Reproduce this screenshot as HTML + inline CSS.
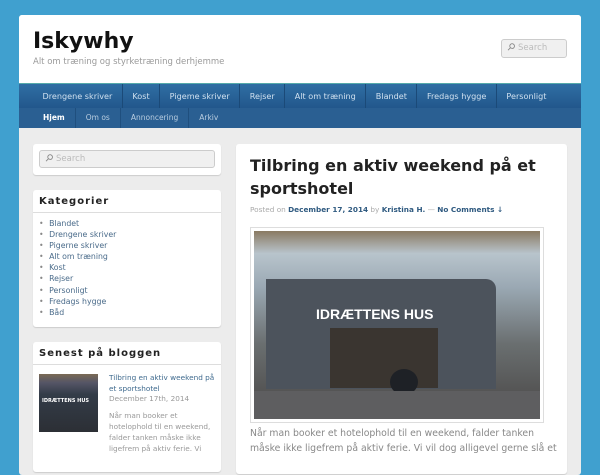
<!DOCTYPE html>
<html><head><meta charset="utf-8"><style>
*{margin:0;padding:0;box-sizing:border-box}
body{width:600px;height:450px;overflow:hidden;background:#40a0cf;font-family:"DejaVu Sans","Liberation Sans",sans-serif;position:relative}
.wrap{position:absolute;left:19px;top:15px;width:562px;height:460px;background:#ececec;border-radius:3px;overflow:hidden}
.hdr{height:68px;background:#fff;position:relative}
.hdr h1{position:absolute;left:14px;top:14px;font-size:22px;font-weight:bold;color:#111}
.hdr p{position:absolute;left:14px;top:42px;font-size:8.5px;color:#9a9a9a}
.srch{position:absolute;left:482px;top:24px;width:66px;height:19px;border:1px solid #ccc;border-radius:3px;background:#f0f0f0;font-size:8.5px;color:#bbb;padding:3px 0 0 16px}
.srch:before{content:"⚲";position:absolute;left:5px;top:2px;color:#888;font-size:10px;transform:rotate(45deg) scaleX(-1)}
.nav{height:25px;background:linear-gradient(#2f6ea4,#22578c);display:flex;padding-left:14px;border-top:1px solid #5aa;}
.nav div{font-size:8.1px;color:#cfe0ef;padding:0 9.5px;line-height:24px;border-right:1px solid #1b4a78;white-space:nowrap}
.nav div:last-child{border:0}
.sub{height:20px;background:#2a5f92;display:flex;padding-left:14px}
.sub div{font-size:7.5px;color:#b9cde0;padding:0 10px;line-height:20px;border-right:1px solid #1f4f7e}
.sub div:last-child{border:0}
.sub .b{font-weight:bold;color:#fff}
.box{position:absolute;background:#fff;border-radius:3px;box-shadow:0 1px 1px #ccc}
.wh{font-weight:bold;font-size:10px;letter-spacing:1px;color:#222;padding:6px 6px;border-bottom:1px solid #ddd;height:23px}
ul{list-style:none;padding:5px 0 0 6px}
li{font-size:7.8px;color:#4a6b8a;line-height:11.1px}
li:before{content:"• ";color:#888;margin-right:3px}
</style></head><body>
<div class="wrap">
<div class="hdr"><h1>Iskywhy</h1><p>Alt om træning og styrketræning derhjemme</p><div class="srch">Search</div></div>
<div class="nav"><div>Drengene skriver</div><div>Kost</div><div>Pigeme skriver</div><div>Rejser</div><div>Alt om træning</div><div>Blandet</div><div>Fredags hygge</div><div>Personligt</div></div>
<div class="sub"><div class="b">Hjem</div><div>Om os</div><div>Annoncering</div><div>Arkiv</div></div>
</div>
<div class="box" style="left:33px;top:144px;width:188px;height:31px"><div class="srch" style="left:6px;top:6px;width:176px;height:18px;">Search</div></div>
<div class="box" style="left:33px;top:190px;width:188px;height:137px"><div class="wh">Kategorier</div>
<ul><li>Blandet</li><li>Drengene skriver</li><li>Pigerne skriver</li><li>Alt om træning</li><li>Kost</li><li>Rejser</li><li>Personligt</li><li>Fredags hygge</li><li>Båd</li></ul></div>
<div class="box" style="left:33px;top:342px;width:188px;height:130px"><div class="wh">Senest på bloggen</div>
<div style="position:absolute;left:6px;top:32px;width:59px;height:58px;background:linear-gradient(#7a6a55 0,#556 15%,#333c48 35%,#2c2f35 100%)"><div style="position:absolute;left:3px;top:24px;font-size:5px;color:#fff;font-weight:bold">IDRÆTTENS HUS</div></div>
<div style="position:absolute;left:76px;top:30px;width:110px;font-size:7.3px;line-height:11px;color:#3f6a8e">Tilbring en aktiv weekend på et sportshotel</div>
<div style="position:absolute;left:76px;top:52px;font-size:7.3px;color:#999">December 17th, 2014</div>
<div style="position:absolute;left:76px;top:68px;width:108px;font-size:7.3px;line-height:11px;color:#999">Når man booker et hotelophold til en weekend, falder tanken måske ikke ligefrem på aktiv ferie. Vi</div></div>
<div class="box" style="left:236px;top:144px;width:331px;height:330px">
<div style="position:absolute;left:14px;top:10px;font-size:16px;font-weight:bold;line-height:23px;color:#222;width:300px">Tilbring en aktiv weekend på et sportshotel</div>
<div style="position:absolute;left:14px;top:61px;font-size:7.3px;color:#aaa;white-space:nowrap">Posted on <b style="color:#2f5a80">December 17, 2014</b> by <b style="color:#2f5a80">Kristina H.</b> — <b style="color:#2f5a80">No Comments ↓</b></div>
<div style="position:absolute;left:14px;top:83px;width:294px;height:196px;border:1px solid #ddd;padding:3px">
<div style="width:100%;height:100%;position:relative;background:linear-gradient(#8a7a62 0,#b8c4cc 12%,#9aa8b3 30%,#6a6f70 60%,#555 85%,#777 100%);overflow:hidden">
<div style="position:absolute;left:12px;top:48px;width:230px;height:110px;background:#4c535c;border-radius:0 10px 0 0"></div>
<div style="position:absolute;left:62px;top:75px;font-size:14px;font-weight:bold;color:#fff;font-family:'Liberation Sans',sans-serif">IDRÆTTENS HUS</div>
<div style="position:absolute;left:76px;top:97px;width:108px;height:60px;background:#3a3530"></div>
<div style="position:absolute;left:136px;top:138px;width:28px;height:26px;border-radius:50%;background:#1e2126"></div>
<div style="position:absolute;left:0;top:160px;width:100%;height:30px;background:#5e5e60"></div>
</div></div>
<div style="position:absolute;left:14px;top:282px;width:310px;font-size:9.3px;line-height:15px;color:#888">Når man booker et hotelophold til en weekend, falder tanken måske ikke ligefrem på aktiv ferie. Vi vil dog alligevel gerne slå et</div>
</div>
</body></html>
